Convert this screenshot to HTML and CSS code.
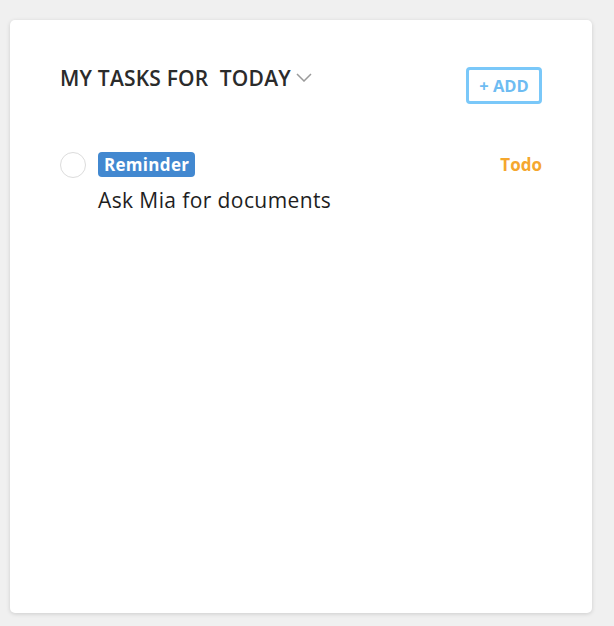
FILE: index.html
```html
<!DOCTYPE html>
<html>
<head>
<meta charset="utf-8">
<link rel="stylesheet" href="styles.css">
</head>
<body>
<div class="card">
  <div class="header">
    <div class="title">MY TASKS FOR&nbsp; TODAY<svg class="chevron" width="16" height="9" viewBox="0 0 16 9"><polyline points="1,1 8,8 15,1" fill="none" stroke="#9a9a9a" stroke-width="1.5"/></svg></div>
    <button class="add">+ ADD</button>
  </div>
  <div class="tasks">
    <div class="task">
      <span class="check"></span>
      <div class="task-body">
        <div class="task-top">
          <span class="badge">Reminder</span>
          <span class="status">Todo</span>
        </div>
        <div class="desc">Ask Mia for documents</div>
      </div>
    </div>
  </div>
</div>
</body>
</html>
```
FILE: styles.css
```css
html, body {
  margin: 0;
  padding: 0;
  background: #f0f0f0;
  font-family: "Open Sans", "Noto Sans", sans-serif;
}
.card {
  margin: 20px 22px 13px 10px;
  height: 593px;
  box-sizing: border-box;
  background: #fff;
  border-radius: 5px;
  box-shadow: 0 1px 4px rgba(0,0,0,0.15);
  padding: 44px 50px 0 50px;
}
.header {
  display: flex;
  justify-content: space-between;
  align-items: flex-start;
}
.title {
  font-size: 21px;
  line-height: 28px;
  font-weight: 600;
  letter-spacing: 0.2px;
  color: #2b2b2b;
  display: flex;
  align-items: center;
}
.chevron {
  margin-left: 5px;
  margin-top: -2px;
}
.add {
  margin-top: 3px;
  width: 76px;
  height: 37px;
  box-sizing: border-box;
  border: 3px solid #7ac8f9;
  border-radius: 4px;
  background: #fff;
  color: #6ebcf2;
  font-family: "Open Sans", sans-serif;
  font-weight: 700;
  font-size: 16.5px;
  padding: 0;
}
.tasks {
  margin-top: 48px;
}
.task {
  display: flex;
  align-items: flex-start;
}
.check {
  width: 26px;
  height: 26px;
  box-sizing: border-box;
  border: 1.5px solid #dcdcdc;
  border-radius: 50%;
  margin-right: 12px;
  flex: none;
}
.task-body {
  flex: 1;
}
.task-top {
  display: flex;
  justify-content: space-between;
  align-items: center;
}
.badge {
  background: #4288d0;
  color: #fff;
  font-weight: 700;
  font-size: 17px;
  letter-spacing: 0.3px;
  line-height: 25px;
  padding: 0 6px;
  border-radius: 4px;
}
.status {
  color: #f5a72e;
  font-weight: 700;
  font-size: 17px;
}
.desc {
  margin-top: 9px;
  font-size: 21px;
  letter-spacing: 0.4px;
  line-height: 28px;
  color: #1e1e1e;
}
```
